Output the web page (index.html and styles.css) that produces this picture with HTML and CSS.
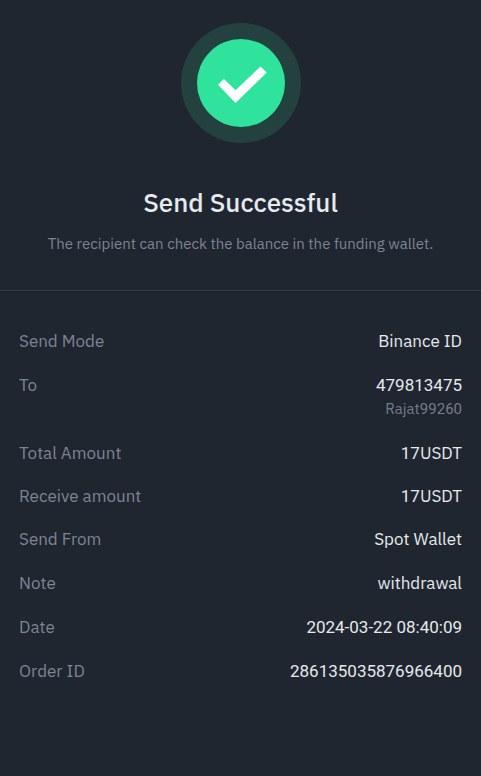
FILE: index.html
```html
<!DOCTYPE html>
<html lang="en">
<head>
<meta charset="utf-8">
<meta name="viewport" content="width=device-width, initial-scale=1">
<title>Send Successful</title>
<link rel="stylesheet" href="styles.css">
</head>
<body>
<main>
  <header class="status">
    <svg class="status-icon" viewBox="0 0 120 120" aria-hidden="true">
      <circle cx="60" cy="60" r="60" fill="#23423f"/>
      <circle cx="60" cy="60" r="44" fill="#2fe39d"/>
      <path d="M37 61.800L43 56L54.500 67.200L79.500 43.400L85.700 49.500L54.500 80Z" fill="#fff"/>
    </svg>
    <h1>Send Successful</h1>
    <p>The recipient can check the balance in the funding wallet.</p>
  </header>
  <div class="details">
    <dl class="group">
      <div class="row"><dt>Send Mode</dt><dd>Binance ID</dd></div>
      <div class="row"><dt>To</dt><dd><span class="num">479813475</span><span class="name">Rajat<span class="num">99260</span></span></dd></div>
    </dl>
    <dl class="group compact">
      <div class="row"><dt>Total Amount</dt><dd><span class="num">17</span>USDT</dd></div>
      <div class="row"><dt>Receive amount</dt><dd><span class="num">17</span>USDT</dd></div>
      <div class="row"><dt>Send From</dt><dd>Spot Wallet</dd></div>
    </dl>
    <dl class="group">
      <div class="row"><dt>Note</dt><dd>withdrawal</dd></div>
      <div class="row"><dt>Date</dt><dd class="num">2024-03-22 08:40:09</dd></div>
      <div class="row"><dt>Order ID</dt><dd class="num">286135035876966400</dd></div>
    </dl>
  </div>
</main>
</body>
</html>
```
FILE: styles.css
```css
* { box-sizing: border-box; }
body {
  margin: 0;
  background: #1f2630;
  color: #e6e9ed;
  font-family: "IBM Plex Sans", Roboto, "Liberation Sans", sans-serif;
}
.status {
  display: flex;
  flex-direction: column;
  align-items: center;
  padding: 23px 16px 34px;
  border-bottom: 1px solid #343c46;
  text-align: center;
}
.status-icon { width: 120px; height: 120px; }
h1 {
  margin: 43px 0 14px;
  font-size: 26px;
  line-height: 32px;
  font-weight: 500;
}
.status p {
  margin: 0;
  font-size: 15px;
  line-height: 24px;
  color: #7c8492;
}
.details,
.group {
  display: flex;
  flex-direction: column;
  gap: 20px;
  margin: 0;
}
.details { padding: 38px 19px; }
.compact { gap: 19px; }
.row {
  display: flex;
  justify-content: space-between;
  font-size: 17px;
  line-height: 24px;
}
dt { color: #7c8492; }
dd { margin: 0; text-align: right; }
.num { font-family: Roboto, "Liberation Sans", sans-serif; }
.name {
  display: block;
  font-size: 15px;
  color: #747c89;
}
```
